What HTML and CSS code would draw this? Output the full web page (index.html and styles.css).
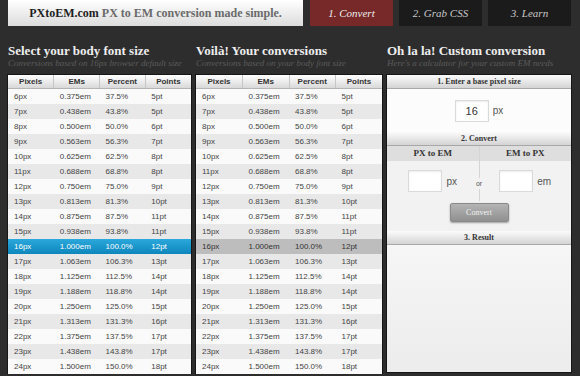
FILE: index.html
```html
<!DOCTYPE HTML>
<html>

<head>
    <meta charset="utf-8">
    <link rel="stylesheet" href="styles.css">
</head>

<body>

    <div class="top">
        <div class="brand"><strong>PXtoEM.com</strong> PX to EM conversion made simple.</div>
        <div class="tabs">
            <a class="tab active">1. Convert</a>
            <a class="tab">2. Grab CSS</a>
            <a class="tab">3. Learn</a>
        </div>
    </div>

    <div class="cols">

        <div class="col">
            <h2>Select your body font size</h2>
            <p class="sub">Conversions based on 16px browser default size</p>
            <table class="conv pick">
                <thead>
                    <tr><th>Pixels</th><th>EMs</th><th>Percent</th><th>Points</th></tr>
                </thead>
                <tbody>
                    <tr><td>6px</td><td>0.375em</td><td>37.5%</td><td>5pt</td></tr>
                    <tr><td>7px</td><td>0.438em</td><td>43.8%</td><td>5pt</td></tr>
                    <tr><td>8px</td><td>0.500em</td><td>50.0%</td><td>6pt</td></tr>
                    <tr><td>9px</td><td>0.563em</td><td>56.3%</td><td>7pt</td></tr>
                    <tr><td>10px</td><td>0.625em</td><td>62.5%</td><td>8pt</td></tr>
                    <tr><td>11px</td><td>0.688em</td><td>68.8%</td><td>8pt</td></tr>
                    <tr><td>12px</td><td>0.750em</td><td>75.0%</td><td>9pt</td></tr>
                    <tr><td>13px</td><td>0.813em</td><td>81.3%</td><td>10pt</td></tr>
                    <tr><td>14px</td><td>0.875em</td><td>87.5%</td><td>11pt</td></tr>
                    <tr><td>15px</td><td>0.938em</td><td>93.8%</td><td>11pt</td></tr>
                    <tr class="on"><td>16px</td><td>1.000em</td><td>100.0%</td><td>12pt</td></tr>
                    <tr><td>17px</td><td>1.063em</td><td>106.3%</td><td>13pt</td></tr>
                    <tr><td>18px</td><td>1.125em</td><td>112.5%</td><td>14pt</td></tr>
                    <tr><td>19px</td><td>1.188em</td><td>118.8%</td><td>14pt</td></tr>
                    <tr><td>20px</td><td>1.250em</td><td>125.0%</td><td>15pt</td></tr>
                    <tr><td>21px</td><td>1.313em</td><td>131.3%</td><td>16pt</td></tr>
                    <tr><td>22px</td><td>1.375em</td><td>137.5%</td><td>17pt</td></tr>
                    <tr><td>23px</td><td>1.438em</td><td>143.8%</td><td>17pt</td></tr>
                    <tr><td>24px</td><td>1.500em</td><td>150.0%</td><td>18pt</td></tr>
                </tbody>
            </table>
        </div>

        <div class="col">
            <h2>Voilà! Your conversions</h2>
            <p class="sub">Conversions based on your body font size</p>
            <table class="conv mirror">
                <thead>
                    <tr><th>Pixels</th><th>EMs</th><th>Percent</th><th>Points</th></tr>
                </thead>
                <tbody>
                    <tr><td>6px</td><td>0.375em</td><td>37.5%</td><td>5pt</td></tr>
                    <tr><td>7px</td><td>0.438em</td><td>43.8%</td><td>5pt</td></tr>
                    <tr><td>8px</td><td>0.500em</td><td>50.0%</td><td>6pt</td></tr>
                    <tr><td>9px</td><td>0.563em</td><td>56.3%</td><td>7pt</td></tr>
                    <tr><td>10px</td><td>0.625em</td><td>62.5%</td><td>8pt</td></tr>
                    <tr><td>11px</td><td>0.688em</td><td>68.8%</td><td>8pt</td></tr>
                    <tr><td>12px</td><td>0.750em</td><td>75.0%</td><td>9pt</td></tr>
                    <tr><td>13px</td><td>0.813em</td><td>81.3%</td><td>10pt</td></tr>
                    <tr><td>14px</td><td>0.875em</td><td>87.5%</td><td>11pt</td></tr>
                    <tr><td>15px</td><td>0.938em</td><td>93.8%</td><td>11pt</td></tr>
                    <tr class="on"><td>16px</td><td>1.000em</td><td>100.0%</td><td>12pt</td></tr>
                    <tr><td>17px</td><td>1.063em</td><td>106.3%</td><td>13pt</td></tr>
                    <tr><td>18px</td><td>1.125em</td><td>112.5%</td><td>14pt</td></tr>
                    <tr><td>19px</td><td>1.188em</td><td>118.8%</td><td>14pt</td></tr>
                    <tr><td>20px</td><td>1.250em</td><td>125.0%</td><td>15pt</td></tr>
                    <tr><td>21px</td><td>1.313em</td><td>131.3%</td><td>16pt</td></tr>
                    <tr><td>22px</td><td>1.375em</td><td>137.5%</td><td>17pt</td></tr>
                    <tr><td>23px</td><td>1.438em</td><td>143.8%</td><td>17pt</td></tr>
                    <tr><td>24px</td><td>1.500em</td><td>150.0%</td><td>18pt</td></tr>
                </tbody>
            </table>
        </div>

        <div class="col">
            <h2>Oh la la! Custom conversion</h2>
            <p class="sub">Here's a calculator for your custom EM needs</p>
            <div class="calc">
                <h3 class="bar">1. Enter a base pixel size</h3>
                <div class="base">
                    <input class="box" type="text" value="16"><span class="unit">px</span>
                </div>

                <h3 class="bar">2. Convert</h3>
                <div class="convert">
                    <div class="split">
                        <div class="half">
                            <h4>PX to EM</h4>
                            <div class="field"><input class="box" type="text"><span class="unit">px</span></div>
                        </div>
                        <div class="half">
                            <h4>EM to PX</h4>
                            <div class="field"><input class="box" type="text"><span class="unit">em</span></div>
                        </div>
                        <span class="or">or</span>
                    </div>
                    <button class="go">Convert</button>
                </div>

                <h3 class="bar">3. Result</h3>
                <div class="result"></div>
            </div>
        </div>

    </div>

</body>

</html>
```

FILE: styles.css
```css
/* общая раскладка */

body {
    margin: 0;
    padding: 0 8px;
    background-color: #2d2d2d;
    font-family: "Liberation Sans", Arial, sans-serif;
}

.top {
    display: flex;
    height: 26px;
}

.brand {
    width: 295px;
    background: linear-gradient(#ffffff, #dcdcdc);
    color: #6a6a6a;
    font: bold 12px/26px "Liberation Serif", Georgia, serif;
    text-align: center;
}

.brand strong {
    color: #1e1e1e;
}

.tabs {
    display: flex;
    gap: 6px;
    margin-left: 7px;
}

.tab {
    width: 83px;
    background-color: #1b1b1b;
    color: #c8c8c8;
    font: italic 11px/26px "Liberation Serif", Georgia, serif;
    text-align: center;
}

.tab.active {
    background-color: #772828;
    color: #eeeeee;
}

.cols {
    display: grid;
    grid-template-columns: 183px 186px 184px;
    column-gap: 5px;
    margin-top: 18px;
}

h2 {
    margin: 0;
    color: #eeeeee;
    font: bold 13px/14px "Liberation Serif", Georgia, serif;
}

.sub {
    margin: 0 0 6px;
    color: #5c5c5c;
    font: italic 9px/11px "Liberation Serif", Georgia, serif;
}

/* таблицы */

.conv {
    width: 100%;
    border-collapse: collapse;
    outline: 1px solid #161616;
    font-size: 8px;
    color: #444;
}

.conv th {
    height: 13px;
    padding: 0;
    background: linear-gradient(#ffffff, #d8d8d8);
    border-left: 1px solid #c6c6c6;
    border-bottom: 1px solid #b5b5b5;
    color: #333;
    font-weight: bold;
    text-align: center;
}

.conv th:first-child {
    border-left: 0;
}

.conv td {
    width: 25%;
    height: 15px;
    padding: 0 0 0 6px;
    text-align: left;
    background-color: #fafafa;
}

.conv tbody tr:nth-child(even) td {
    background-color: #e8e8e8;
}

.pick tr.on td,
.pick tbody tr.on:nth-child(odd) td {
    background: linear-gradient(#2ba8dc, #0d86bc);
    color: #ffffff;
}

.mirror tbody tr.on td {
    background-color: #bdbdbd;
    color: #333;
}

/* калькулятор */

.calc {
    height: 297px;
    display: flex;
    flex-direction: column;
    outline: 1px solid #161616;
    background-color: #f2f2f2;
}

.bar {
    margin: 0;
    height: 13px;
    background: linear-gradient(#fbfbfb, #d4d4d4);
    border-bottom: 1px solid #a8a8a8;
    color: #333;
    font: bold 8px/13px "Liberation Serif", Georgia, serif;
    text-align: center;
}

.base {
    height: 43px;
    display: flex;
    align-items: center;
    justify-content: center;
    background-color: #fcfcfc;
}

.box {
    width: 34px;
    height: 22px;
    box-sizing: border-box;
    margin: 0;
    padding: 0;
    border: 1px solid #dadada;
    background-color: #ffffff;
    box-shadow: inset 0 1px 2px rgba(0, 0, 0, 0.08);
    color: #333;
    font: 11px "Liberation Sans", Arial, sans-serif;
    text-align: center;
}

.unit {
    margin-left: 4px;
    color: #555;
    font-size: 10px;
}

.convert {
    height: 85px;
    display: flex;
    flex-direction: column;
    align-items: center;
    background-color: #f2f2f2;
}

.split {
    position: relative;
    width: 100%;
    display: flex;
}

.half {
    flex: 1;
    border-left: 1px solid #d4d4d4;
}

.half:first-child {
    border-left: 0;
}

.half h4 {
    margin: 0;
    height: 15px;
    background-color: #dedede;
    color: #333;
    font: bold 9px/15px "Liberation Serif", Georgia, serif;
    text-align: center;
}

.field {
    height: 40px;
    display: flex;
    align-items: center;
    justify-content: center;
}

.or {
    position: absolute;
    left: 50%;
    top: 32px;
    transform: translateX(-50%);
    padding: 2px 0;
    background-color: #f2f2f2;
    color: #555;
    font-size: 7px;
}

.go {
    width: 59px;
    height: 19px;
    margin-top: 2px;
    border: 1px solid #8a8a8a;
    border-radius: 2px;
    background: linear-gradient(#b4b4b4, #909090);
    box-shadow: 0 1px 2px rgba(0, 0, 0, 0.35);
    color: #f2f2f2;
    font: 8px "Liberation Serif", Georgia, serif;
}

.result {
    flex: 1;
    background: linear-gradient(#f6f6f6, #ececec);
}
```
